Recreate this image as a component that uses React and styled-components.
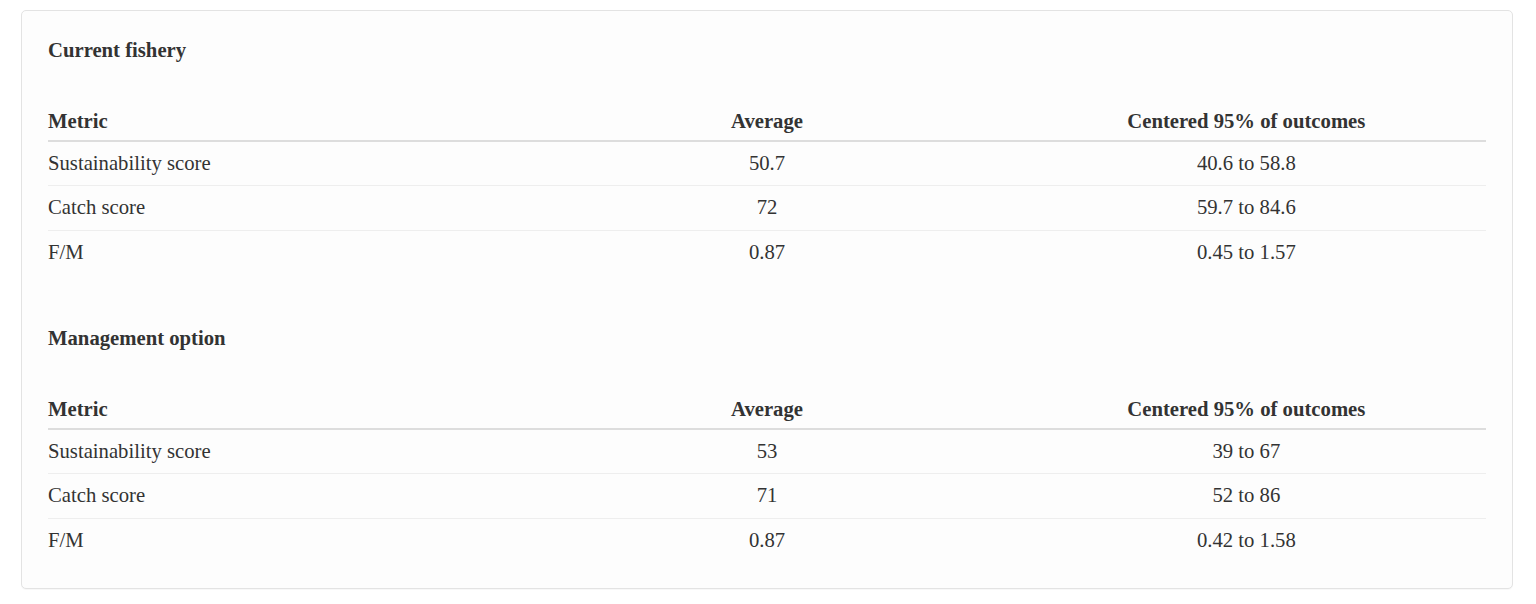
import styled, { createGlobalStyle } from "styled-components";

const GlobalStyle = createGlobalStyle`
  body {
    margin: 0;
    background: #ffffff;
    font-family: "Liberation Serif", "Times New Roman", serif;
    color: #333333;
  }
`;

const Page = styled.div`
  padding: 10px 23px 15px 21px;
`;

const Card = styled.div`
  background: #fdfdfd;
  border: 1px solid #e3e3e3;
  border-radius: 5px;
  box-shadow: 0 1px 1px rgba(0, 0, 0, 0.03);
  padding: 27px 26px 26px 26px;
`;

const Section = styled.section`
  & + & {
    margin-top: 52px;
  }
`;

const Title = styled.h4`
  margin: 0 0 38px 0;
  font-size: 20.7px;
  line-height: 24px;
  font-weight: 700;
`;

const Table = styled.table`
  width: 100%;
  border-collapse: collapse;
  table-layout: fixed;
  font-size: 20.7px;
`;

const Th = styled.th`
  padding: 10px 0 6px;
  line-height: 23.5px;
  font-weight: 700;
  text-align: ${(p) => (p.$left ? "left" : "center")};
  border-bottom: 2px solid #dddddd;
`;

const Td = styled.td`
  padding: 10px 0;
  line-height: 23.5px;
  text-align: ${(p) => (p.$left ? "left" : "center")};
  border-top: ${(p) => (p.$first ? "none" : "1px solid #eeeeee")};
`;

const sections = [
  {
    title: "Current fishery",
    rows: [
      ["Sustainability score", "50.7", "40.6 to 58.8"],
      ["Catch score", "72", "59.7 to 84.6"],
      ["F/M", "0.87", "0.45 to 1.57"],
    ],
  },
  {
    title: "Management option",
    rows: [
      ["Sustainability score", "53", "39 to 67"],
      ["Catch score", "71", "52 to 86"],
      ["F/M", "0.87", "0.42 to 1.58"],
    ],
  },
];

export default function App() {
  return (
    <Page>
      <GlobalStyle />
      <Card>
        {sections.map((s) => (
          <Section key={s.title}>
            <Title>{s.title}</Title>
            <Table>
              <thead>
                <tr>
                  <Th $left>Metric</Th>
                  <Th>Average</Th>
                  <Th>Centered 95% of outcomes</Th>
                </tr>
              </thead>
              <tbody>
                {s.rows.map((r, i) => (
                  <tr key={r[0]}>
                    <Td $left $first={i === 0}>{r[0]}</Td>
                    <Td $first={i === 0}>{r[1]}</Td>
                    <Td $first={i === 0}>{r[2]}</Td>
                  </tr>
                ))}
              </tbody>
            </Table>
          </Section>
        ))}
      </Card>
    </Page>
  );
}
